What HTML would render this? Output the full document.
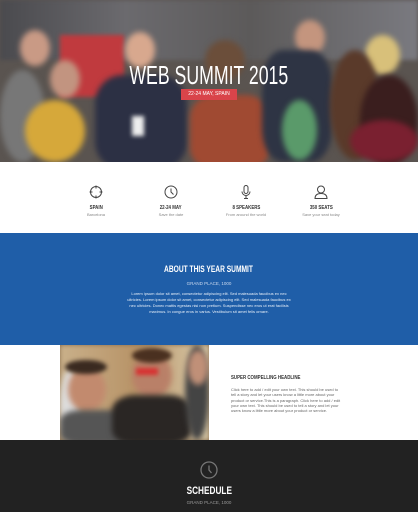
<!DOCTYPE html>
<html><head><meta charset="utf-8"><style>
*{margin:0;padding:0;box-sizing:border-box}
body{width:418px;height:512px;overflow:hidden;font-family:"Liberation Sans",sans-serif;background:#fff;position:relative}
.sx{display:inline-block;transform-origin:center}
#hero{position:absolute;left:0;top:0;width:418px;height:162px;overflow:hidden;background:#5a5450}
.b{position:absolute;border-radius:50%;filter:blur(3px)}
.r{position:absolute;filter:blur(2px)}
#hero h1{position:absolute;left:0;width:418px;top:61px;text-align:center;color:#fff;font-size:26px;font-weight:normal;line-height:28px}
#hero h1 span{transform:scaleX(0.68)}
.badge{position:absolute;left:181px;top:89px;width:56px;height:11px;background:#d9444a;color:#fff;font-size:5px;line-height:11px;text-align:center}
.feat{position:absolute;top:185px;width:80px;text-align:center;color:#333}
.feat svg{display:block;margin:0 auto}
.feat b{display:block;font-size:5.5px;margin-top:6px}
.feat b span{transform:scaleX(0.8)}
.feat i{display:block;font-style:normal;font-size:4px;color:#888;margin-top:1px}
#blue{position:absolute;left:0;top:233px;width:418px;height:112px;background:#1f5ea8;color:#fff;text-align:center}
#blue h2{font-size:9.5px;margin-top:31px}
#blue h2 span{transform:scaleX(0.7)}
#blue .s{font-size:4.5px;color:#c9d8ee;margin-top:6px}
#blue p{font-size:4px;line-height:6px;width:165px;margin:5px auto 0;color:#e6eef8}
#img{position:absolute;left:60px;top:345px;width:149px;height:95px;overflow:hidden;background:#8a6e4e}
#txt{position:absolute;left:231px;top:375px;width:110px;color:#333}
#txt h3{font-size:5.5px;transform:scaleX(0.8);transform-origin:left}
#txt p{font-size:4px;line-height:5.3px;color:#666;margin-top:6px}
#dark{position:absolute;left:0;top:440px;width:418px;height:72px;background:#222;text-align:center;color:#fff}
#dark h2{font-size:11px;margin-top:45px}
#dark h2 span{transform:scaleX(0.75)}
#dark .s{font-size:4.5px;color:#999;margin-top:3px}
</style></head><body>
<div id="hero">
<div class="r" style="left:0;top:0;width:418px;height:60px;background:linear-gradient(90deg,#4a4a4e,#6b6a6e 30%,#5c5a5a 60%,#7a7a80)"></div>
<div class="r" style="left:60px;top:35px;width:64px;height:62px;background:#c03a3e"></div>
<div class="b" style="left:20px;top:30px;width:30px;height:36px;background:#c99a85"></div>
<div class="b" style="left:0;top:70px;width:45px;height:92px;background:#777"></div>
<div class="b" style="left:50px;top:60px;width:30px;height:38px;background:#c29480"></div>
<div class="b" style="left:25px;top:100px;width:60px;height:62px;background:#d6a83a"></div>
<div class="b" style="left:125px;top:32px;width:30px;height:36px;background:#d8a88e"></div>
<div class="b" style="left:95px;top:75px;width:92px;height:95px;background:#2c3044;border-radius:30%"></div>
<div class="r" style="left:132px;top:116px;width:12px;height:20px;background:#eee"></div>
<div class="b" style="left:205px;top:40px;width:40px;height:40px;background:#6b4e3a"></div>
<div class="b" style="left:190px;top:95px;width:80px;height:75px;background:#a04a32;border-radius:30%"></div>
<div class="b" style="left:295px;top:20px;width:30px;height:35px;background:#c4957e"></div>
<div class="b" style="left:262px;top:50px;width:70px;height:112px;background:#2e3444;border-radius:30%"></div>
<div class="b" style="left:282px;top:100px;width:35px;height:60px;background:#5a9a6a"></div>
<div class="b" style="left:365px;top:35px;width:35px;height:40px;background:#d8c07a"></div>
<div class="b" style="left:330px;top:50px;width:50px;height:110px;background:#5a3a2a"></div>
<div class="b" style="left:360px;top:75px;width:58px;height:90px;background:#3a1e1e"></div>
<div class="b" style="left:350px;top:120px;width:68px;height:42px;background:#7a2030"></div>
<h1><span class="sx">WEB SUMMIT 2015</span></h1>
<div class="badge">22-24 MAY, SPAIN</div>
</div>

<div class="feat" style="left:56px"><svg width="14" height="14" viewBox="0 0 14 14" fill="none" stroke="#444" stroke-width="1"><circle cx="7" cy="7" r="5.5"/><path d="M7 0.5v3M7 10.5v3M0.5 7h3M10.5 7h3"/></svg><b><span class="sx">SPAIN</span></b><i>Barcelona</i></div>
<div class="feat" style="left:131px"><svg width="14" height="14" viewBox="0 0 14 14" fill="none" stroke="#444" stroke-width="1"><circle cx="7" cy="7" r="6"/><path d="M7 3.5V7l2.5 2.5"/></svg><b><span class="sx">22-24 MAY</span></b><i>Save the date</i></div>
<div class="feat" style="left:206px"><svg width="14" height="14" viewBox="0 0 14 14" fill="none" stroke="#444" stroke-width="1"><rect x="5" y="0.5" width="4" height="8" rx="2"/><path d="M3 6.5a4 4 0 0 0 8 0M7 10.5v3M5 13.5h4"/></svg><b><span class="sx">8 SPEAKERS</span></b><i>From around the world</i></div>
<div class="feat" style="left:281px"><svg width="14" height="14" viewBox="0 0 14 14" fill="none" stroke="#444" stroke-width="1"><circle cx="7" cy="4.5" r="3.5"/><path d="M1 13.5c0-4 2.5-5 6-5s6 1 6 5z"/></svg><b><span class="sx">350 SEATS</span></b><i>Save your seat today</i></div>

<div id="blue">
<h2><span class="sx">ABOUT THIS YEAR SUMMIT</span></h2>
<div class="s">GRAND PLACE, 1000</div>
<p>Lorem ipsum dolor sit amet, consectetur adipiscing elit. Sed malesuada faucibus ex nec ultricies. Lorem ipsum dolor sit amet, consectetur adipiscing elit. Sed malesuada faucibus ex nec ultricies. Donec mattis egestas nisi non pretium. Suspendisse nec eros ut erat facilisis maximus. In congue eros in varius. Vestibulum sit amet felis ornare.</p>
</div>

<div id="img">
<div class="r" style="left:0;top:0;width:149px;height:95px;background:linear-gradient(90deg,#c9b08a,#b89468 50%,#d8c8a8)"></div>
<div class="b" style="left:0;top:25px;width:20px;height:70px;background:#ddd"></div>
<div class="b" style="left:8px;top:22px;width:38px;height:45px;background:#c28a6e"></div>
<div class="r" style="left:5px;top:15px;width:42px;height:14px;background:#3a2a20;border-radius:50%"></div>
<div class="b" style="left:0;top:65px;width:72px;height:35px;background:#555;border-radius:30%"></div>
<div class="b" style="left:72px;top:8px;width:40px;height:45px;background:#b98068"></div>
<div class="r" style="left:72px;top:3px;width:40px;height:15px;background:#4a3020;border-radius:50%"></div>
<div class="r" style="left:76px;top:23px;width:22px;height:7px;background:#d83030"></div>
<div class="b" style="left:52px;top:50px;width:80px;height:50px;background:#2a2624;border-radius:30%"></div>
<div class="b" style="left:125px;top:0;width:24px;height:95px;background:#444"></div>
<div class="b" style="left:128px;top:5px;width:20px;height:35px;background:#c09078"></div>
</div>
<div id="txt"><h3>SUPER COMPELLING HEADLINE</h3><p>Click here to add / edit your own text. This should be used to tell a story and let your users know a little more about your product or service.This is a paragraph. Click here to add / edit your own text. This should be used to tell a story and let your users know a little more about your product or service.</p></div>

<div id="dark">
<svg style="position:absolute;left:200px;top:21px" width="18" height="18" viewBox="0 0 18 18" fill="none" stroke="#777" stroke-width="1.3"><circle cx="9" cy="9" r="8"/><path d="M9 4.5V9l2.5 3"/></svg>
<h2><span class="sx">SCHEDULE</span></h2>
<div class="s">GRAND PLACE, 1000</div>
</div>
</body></html>
